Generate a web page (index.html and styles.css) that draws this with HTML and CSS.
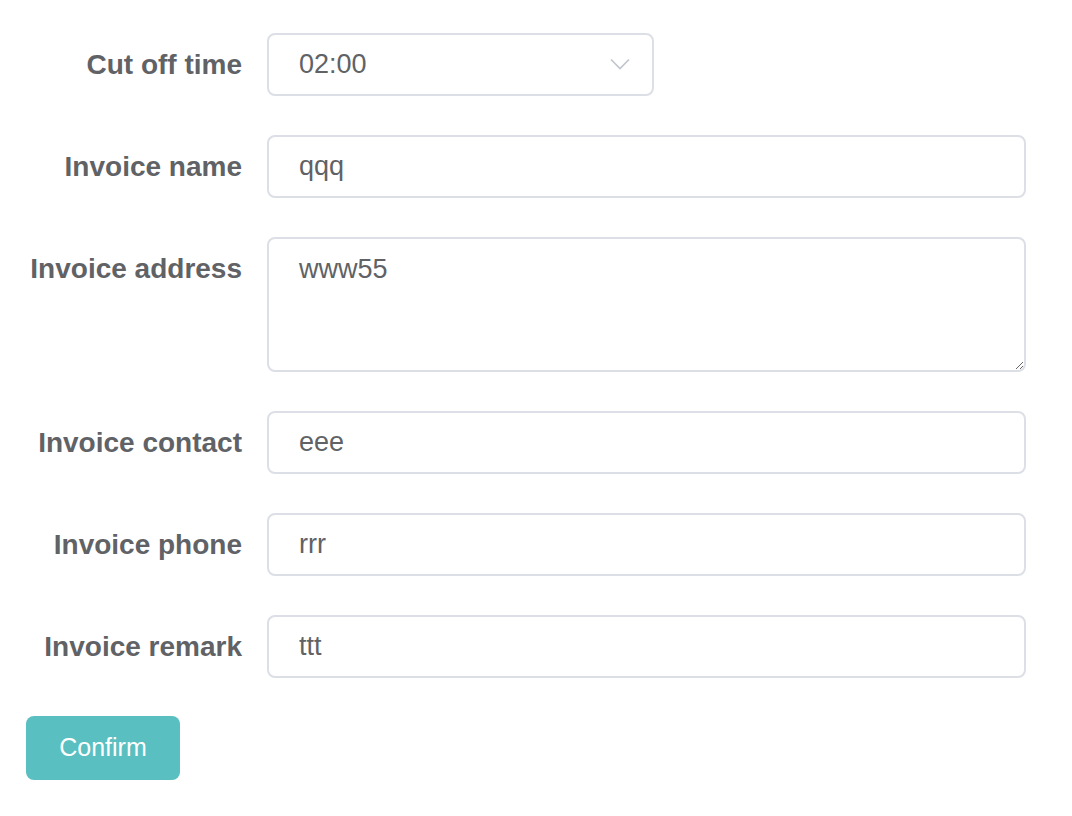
FILE: index.html
```html
<!DOCTYPE html>
<html>
<head>
<meta charset="utf-8">
<link rel="stylesheet" href="styles.css">
</head>
<body>
<form class="form">
  <div class="item">
    <label class="label">Cut off time</label>
    <div class="control select">
      <input class="input" type="text" value="02:00" readonly>
      <svg class="arrow" width="20" height="12" viewBox="0 0 20 12"><path d="M1 1.5 L10 10.5 L19 1.5" fill="none" stroke="#c0c4cc" stroke-width="1.6"/></svg>
    </div>
  </div>
  <div class="item">
    <label class="label">Invoice name</label>
    <div class="control"><input class="input" type="text" value="qqq"></div>
  </div>
  <div class="item">
    <label class="label">Invoice address</label>
    <div class="control"><textarea class="textarea">www55</textarea></div>
  </div>
  <div class="item">
    <label class="label">Invoice contact</label>
    <div class="control"><input class="input" type="text" value="eee"></div>
  </div>
  <div class="item">
    <label class="label">Invoice phone</label>
    <div class="control"><input class="input" type="text" value="rrr"></div>
  </div>
  <div class="item">
    <label class="label">Invoice remark</label>
    <div class="control"><input class="input" type="text" value="ttt"></div>
  </div>
  <div class="actions">
    <button class="btn" type="button">Confirm</button>
  </div>
</form>
</body>
</html>
```

FILE: styles.css
```css
html, body {
  margin: 0;
  padding: 0;
  background: #ffffff;
}
body {
  font-family: "Liberation Sans", Arial, sans-serif;
  color: #606266;
}
.form {
  padding: 33px 0 0 26px;
  display: flex;
  flex-direction: column;
  gap: 39px;
}
.item {
  display: flex;
  align-items: flex-start;
}
.label {
  width: 241px;
  flex: none;
  box-sizing: border-box;
  padding-right: 25px;
  text-align: right;
  font-size: 28px;
  font-weight: bold;
  line-height: 63px;
  color: #606266;
}
.control {
  width: 759px;
  position: relative;
}
.control.select {
  width: 387px;
}
.input, .textarea {
  display: block;
  width: 100%;
  box-sizing: border-box;
  border: 2px solid #dcdfe6;
  border-radius: 8px;
  font-family: "Liberation Sans", Arial, sans-serif;
  font-size: 27px;
  color: #606266;
  background: #fff;
  outline: none;
  margin: 0;
}
.input {
  height: 63px;
  padding: 0 30px;
}
.select .input {
  padding-right: 60px;
}
.textarea {
  height: 135px;
  padding: 10px 30px;
  line-height: 40px;
  resize: vertical;
}
.arrow {
  position: absolute;
  right: 24px;
  top: 25px;
}
.actions {
  display: flex;
  margin-top: -1px;
}
.btn {
  width: 154px;
  height: 64px;
  border: none;
  border-radius: 8px;
  background: #5abfc0;
  color: #ffffff;
  font-family: "Liberation Sans", Arial, sans-serif;
  font-size: 25px;
  padding: 0 0 1px;
}
```
